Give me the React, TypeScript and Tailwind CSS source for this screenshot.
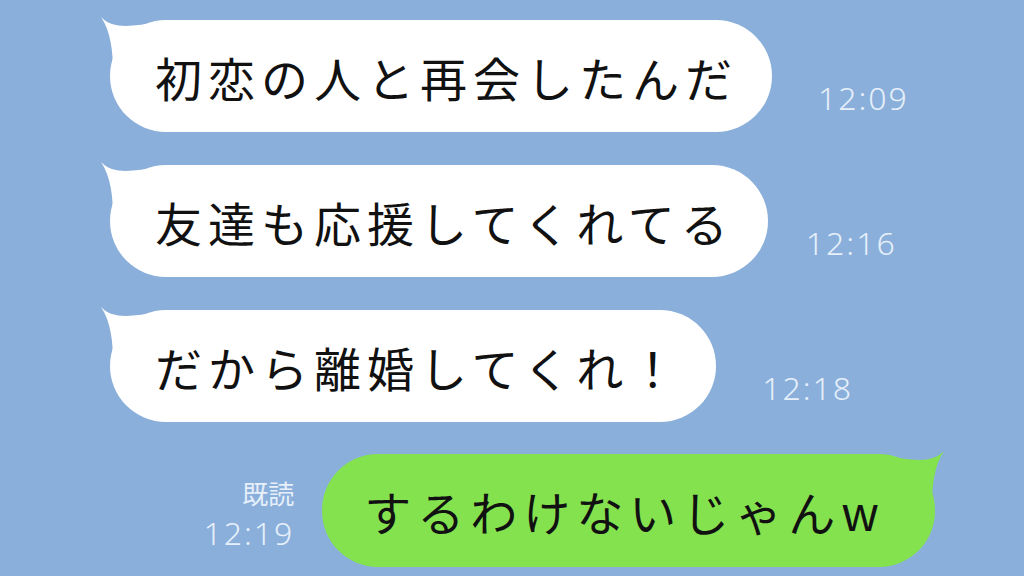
import { FC } from "react"

const jp = { fontFamily: '"Noto Sans CJK JP", "Noto Sans", sans-serif' }
const num = { fontFamily: '"Noto Sans", "Liberation Sans", sans-serif' }

const LeftTail = () => (
  <svg className="absolute -left-[11px] -top-[6px]" width="62" height="60" viewBox="0 0 62 60">
    <path d="M2 3 C 14 16, 34 12, 60 8 L 60 58 L 14 58 C 14 38, 12 18, 2 3 Z" fill="#ffffff" />
  </svg>
)

const RightTail = () => (
  <svg className="absolute -right-[11px] -top-[6px]" width="62" height="60" viewBox="0 0 62 60">
    <path d="M60 3 C 48 16, 28 12, 2 8 L 2 58 L 48 58 C 48 38, 50 18, 60 3 Z" fill="#85e24f" />
  </svg>
)

interface MsgProps {
  text: string
  time: string
  gap: string
}

const Incoming: FC<MsgProps> = ({ text, time, gap }) => (
  <div className={`flex items-end ${gap}`}>
    <div className="relative h-[112px] rounded-[56px] bg-white pl-[45px] pr-[34px] flex items-center">
      <LeftTail />
      <span className="relative text-[47px] tracking-[6px] text-[#111] leading-none" style={jp}>{text}</span>
    </div>
    <span className="mb-[10px] text-[32px] font-light tracking-[2px] text-[#e6effa]" style={num}>{time}</span>
  </div>
)

export default function App() {
  return (
    <div className="w-[1024px] h-[576px] overflow-hidden bg-[#8aafda] flex flex-col pt-[20px] pl-[110px] gap-[33px]">
      <Incoming text="初恋の人と再会したんだ" time="12:09" gap="gap-[46px]" />
      <Incoming text="友達も応援してくれてる" time="12:16" gap="gap-[38px]" />
      <Incoming text="だから離婚してくれ！" time="12:18" gap="gap-[46px]" />
      <div className="flex items-end justify-end gap-[28px] pr-[89px] -mt-[1px]">
        <div className="mb-[14px] flex flex-col items-end gap-[4px] text-[#e6effa] leading-tight">
          <span className="text-[26px]" style={jp}>既読</span>
          <span className="text-[32px] font-light tracking-[2px]" style={num}>12:19</span>
        </div>
        <div className="relative h-[113px] rounded-[56px] bg-[#85e24f] pl-[42px] pr-[50px] flex items-center">
          <RightTail />
          <span className="relative text-[47px] tracking-[6px] text-[#111] leading-none" style={jp}>するわけないじゃんw</span>
        </div>
      </div>
    </div>
  )
}
